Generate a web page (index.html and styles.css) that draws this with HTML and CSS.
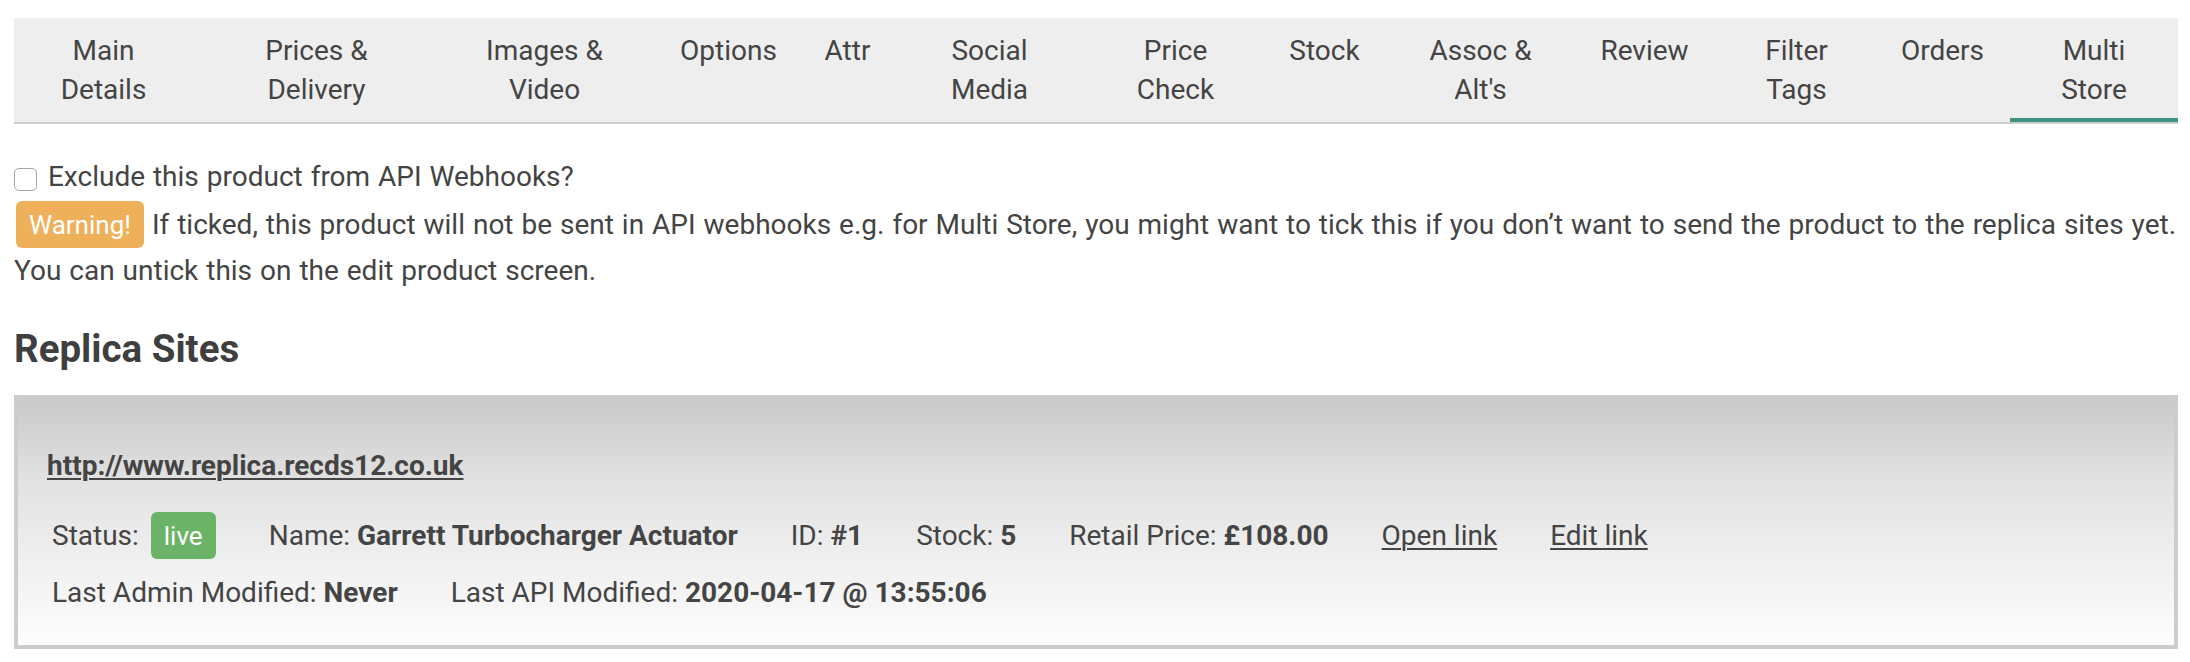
FILE: index.html
```html
<!DOCTYPE html>
<html lang="en">
<head>
<meta charset="utf-8">
<title>Multi Store</title>
<link rel="stylesheet" href="styles.css">
</head>
<body>
<div class="page">
  <nav class="tabs">
    <a class="tab">Main<br>Details</a>
    <a class="tab">Prices &amp;<br>Delivery</a>
    <a class="tab">Images &amp;<br>Video</a>
    <a class="tab">Options</a>
    <a class="tab">Attr</a>
    <a class="tab">Social<br>Media</a>
    <a class="tab">Price<br>Check</a>
    <a class="tab">Stock</a>
    <a class="tab">Assoc &amp;<br>Alt's</a>
    <a class="tab">Review</a>
    <a class="tab">Filter<br>Tags</a>
    <a class="tab">Orders</a>
    <a class="tab active">Multi<br>Store</a>
  </nav>

  <div class="options">
    <label class="check-line"><input type="checkbox" class="check"> Exclude this product from API Webhooks?</label>
    <p class="note"><span class="label label-warning">Warning!</span> If ticked, this product will not be sent in API webhooks e.g. for Multi Store, you might want to tick this if you don’t want to send the product to the replica sites yet.<br>You can untick this on the edit product screen.</p>
  </div>

  <h2 class="section-title">Replica Sites</h2>

  <div class="site">
    <a class="site-url">http://www.replica.recds12.co.uk</a>
    <div class="site-row status-row">
      <span class="field">Status: <span class="label label-success">live</span></span>
      <span class="field">Name: <b>Garrett Turbocharger Actuator</b></span>
      <span class="field">ID: <b>#1</b></span>
      <span class="field">Stock: <b>5</b></span>
      <span class="field">Retail Price: <b>£108.00</b></span>
      <a class="field link">Open link</a>
      <a class="field link">Edit link</a>
    </div>
    <div class="site-row">
      <span class="field">Last Admin Modified: <b>Never</b></span>
      <span class="field">Last API Modified: <b>2020-04-17 @ 13:55:06</b></span>
    </div>
  </div>
</div>
</body>
</html>
```

FILE: styles.css
```css
* { box-sizing: border-box; }

html, body {
  margin: 0;
  background: #ffffff;
}

body {
  font-family: Roboto, "Liberation Sans", Arial, sans-serif;
  font-size: 28px;
  line-height: 46.6px;
  color: #444444;
}

.page {
  padding: 18px 12px 0 14px;
}

/* Tabs */
.tabs {
  display: grid;
  grid-template-columns: 179px 247px 209px 159px 79px 205px 167px 131px 181px 147px 157px 135px 168px;
  background: #eeeeee;
  border-bottom: 2px solid #cfcfcf;
}

.tab {
  display: block;
  padding: 13px 0 13px;
  text-align: center;
  white-space: nowrap;
  line-height: 39px;
  color: #444444;
  text-decoration: none;
}

.tab.active {
  box-shadow: inset 0 -4px 0 #3a9282;
}

/* Options */
.options {
  margin-top: 30px;
  word-spacing: 1px;
}

.check-line {
  display: block;
}

.check {
  -webkit-appearance: none;
  appearance: none;
  display: inline-block;
  width: 23px;
  height: 23px;
  margin: 0 3px 0 0;
  vertical-align: -5px;
  border: 1.5px solid #a5a5a5;
  border-radius: 5px;
  background: #ffffff;
}

.note {
  margin: 0;
}

.label {
  display: inline-block;
  padding: 11px 13px 10px;
  font-size: 26px;
  line-height: 26px;
  color: #ffffff;
  border-radius: 6px;
  word-spacing: 0;
}

.label-warning {
  background: #efb05a;
  margin-left: 2px;
}

.label-success {
  background: #6bb366;
  margin-left: 5px;
}

/* Section */
.section-title {
  margin: 33px 0 25px;
  font-size: 38.5px;
  line-height: 42px;
  font-weight: 700;
  color: #3f3f3f;
}

.site {
  border: 4px solid #cccccc;
  background: linear-gradient(to bottom, #c9c9c9 0%, #e3e3e3 35%, #fdfdfd 100%);
  padding: 44px 29px 28px;
}

.site-url {
  display: block;
  font-weight: 700;
  color: #444444;
  text-decoration: underline;
  text-decoration-thickness: 2px;
  text-underline-offset: 3px;
}

.site-row {
  display: flex;
  align-items: baseline;
  column-gap: 53px;
  padding-left: 5px;
  margin-top: 10px;
}

.status-row {
  margin-top: 23px;
}

.field b {
  font-weight: 700;
}

.link {
  color: #444444;
  text-decoration: underline;
  text-decoration-thickness: 2px;
  text-underline-offset: 3px;
}
```
